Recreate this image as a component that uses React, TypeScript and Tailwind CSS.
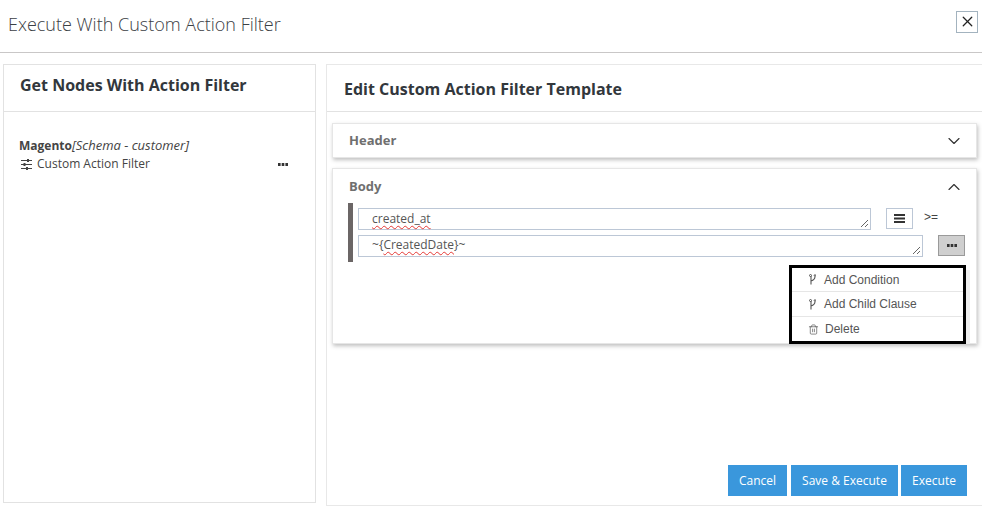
import { ChevronDown, ChevronUp, Trash2, X } from 'lucide-react';

const Dots = () => (
  <svg width="10" height="3" viewBox="0 0 10 3" className="fill-[#333]">
    <rect x="0" y="0" width="2.6" height="3" />
    <rect x="3.7" y="0" width="2.6" height="3" />
    <rect x="7.4" y="0" width="2.6" height="3" />
  </svg>
);

const Grip = () => (
  <svg width="9" height="9" viewBox="0 0 9 9" className="absolute right-[1px] bottom-[1px] stroke-[#666]" fill="none">
    <path d="M1 8 8 1M5 8 8 5" strokeWidth="1" />
  </svg>
);

const BranchIcon = () => (
  <svg width="7" height="11" viewBox="0 0 7 11" fill="none" className="stroke-[#555]">
    <path d="M2 2V10.5M6 2.5C6 5 5 6 2 7" strokeWidth="1.1" />
    <circle cx="1.5" cy="1.5" r="1" />
    <circle cx="6" cy="1.5" r="0.8" />
  </svg>
);

const SlidersIcon = () => (
  <svg width="11" height="11" viewBox="0 0 11 11" className="fill-[#444]">
    <rect x="0" y="1" width="11" height="1" />
    <rect x="6" y="0" width="2" height="3" />
    <rect x="0" y="5" width="11" height="1" />
    <rect x="2.5" y="4" width="2" height="3" />
    <rect x="0" y="9" width="11" height="1" />
    <rect x="5" y="8" width="2" height="3" />
  </svg>
);

const BarsIcon = () => (
  <svg width="11" height="9" viewBox="0 0 11 9" className="fill-[#333]">
    <rect x="0" y="0" width="11" height="2" />
    <rect x="0" y="3.5" width="11" height="2" />
    <rect x="0" y="7" width="11" height="2" />
  </svg>
);

const menuItems = [
  { label: 'Add Condition', icon: <BranchIcon />, row: 'h-[24px] gap-[8px] pl-[17px] border-b border-[#e6e6e6]' },
  { label: 'Add Child Clause', icon: <BranchIcon />, row: 'h-[25px] gap-[8px] pl-[17px] border-b border-[#e6e6e6]' },
  { label: 'Delete', icon: <Trash2 size={11} strokeWidth={1.5} className="text-[#555]" />, row: 'h-[24px] gap-[6px] pl-[16px]' },
];

export default function App() {
  return (
    <div className="w-[982px] h-[513px] overflow-hidden bg-white text-[#333] font-['Open_Sans',sans-serif]">
      <div className="h-[53px] flex items-center justify-between border-b border-[#c9c7c7] pl-[8px] pr-[4px]">
        <h1 className="text-[18px] font-light text-[#3b4045] mb-[3px]">Execute With Custom Action Filter</h1>
        <button className="w-[22px] h-[22px] mb-[9px] flex items-center justify-center border border-[#a3b3bf]">
          <X size={17} strokeWidth={1.8} className="text-[#222]" />
        </button>
      </div>

      <div className="flex pt-[11px] pl-[3px] gap-[10px]">
        <div className="w-[313px] h-[439px] border border-[#e2e2e2]">
          <div className="h-[47px] border-b border-[#e2e2e2] pl-[16px] flex items-center">
            <h2 className="text-[16px] font-bold text-[#32373c] mb-[7px]">Get Nodes With Action Filter</h2>
          </div>
          <div className="pt-[24px] pl-[15px] pr-[27px] text-[12px] leading-[18px]">
            <div className="text-[#444]">
              <span className="font-bold">Magento</span>
              <span className="italic text-[13px]">[Schema - customer]</span>
            </div>
            <div className="flex items-center justify-between">
              <div className="flex items-center gap-[5px] text-[#444] pl-[2px] mb-[1px]">
                <SlidersIcon />
                <span>Custom Action Filter</span>
              </div>
              <Dots />
            </div>
          </div>
        </div>

        <div className="flex-1 h-[442px] border border-[#e8e8e8] border-r-0 flex flex-col">
          <div className="h-[47px] border-b border-[#e2e2e2] pl-[17px] flex items-center shrink-0">
            <h2 className="text-[16px] font-bold text-[#32373c] mt-[2px]">Edit Custom Action Filter Template</h2>
          </div>

          <div className="pl-[5px] pr-[5px] pt-[11px] flex flex-col gap-[10px]">
            <div className="h-[35px] border border-[#e6e6e6] shadow-[1px_2px_4px_rgba(0,0,0,0.25)] flex items-center justify-between pl-[16px] pr-[12px]">
              <span className="text-[13px] font-bold text-[#6f6f6f]">Header</span>
              <ChevronDown size={20} strokeWidth={1.4} className="text-[#333]" />
            </div>

            <div className="relative h-[176px] border border-[#e6e6e6] shadow-[1px_2px_4px_rgba(0,0,0,0.25)]">
              <div className="h-[34px] flex items-center justify-between pl-[16px] pr-[12px] pb-[1px] pt-[2px]">
                <span className="text-[13px] font-bold text-[#6f6f6f]">Body</span>
                <ChevronUp size={20} strokeWidth={1.4} className="text-[#333]" />
              </div>

              <div className="ml-[15px] h-[59px] border-l-[5px] border-[#6b6666] pl-[5px] pt-[5px] flex flex-col gap-[5px] text-[12px]">
                <div className="flex items-start h-[22px]">
                  <div className="relative w-[513px] h-[22px] border border-[#bcc7d6] pl-[13px] pt-[1px] leading-[18px] text-[#555]">
                    <span className="underline decoration-wavy decoration-[#e53935] decoration-1 underline-offset-2">created_at</span>
                    <Grip />
                  </div>
                  <button className="ml-[15px] w-[27px] h-[21px] border border-[#bcc7d6] flex items-center justify-center">
                    <BarsIcon />
                  </button>
                  <span className="ml-[11px] text-[12px] text-[#444] font-['Liberation_Sans',sans-serif]">&gt;=</span>
                </div>
                <div className="flex items-start h-[22px]">
                  <div className="relative w-[565px] h-[22px] border border-[#bcc7d6] pl-[13px] leading-[18px] text-[#555]">
                    ~{'{'}<span className="underline decoration-wavy decoration-[#e53935] decoration-1 underline-offset-2">CreatedDate</span>{'}'}~
                    <Grip />
                  </div>
                  <button className="ml-[15px] w-[27px] h-[21px] bg-[#cfcfcf] border border-[#9a9a9a] flex items-center justify-center">
                    <Dots />
                  </button>
                </div>
              </div>

              <div className="absolute top-[96px] left-[456px] w-[177px] h-[79px] border-[3px] border-black bg-white text-[12px] text-[#555] font-['Liberation_Sans',sans-serif]">
                {menuItems.map((item) => (
                  <div key={item.label} className={`flex items-center ${item.row}`}>
                    {item.icon}
                    <span>{item.label}</span>
                  </div>
                ))}
              </div>
              <div className="absolute top-[101px] left-[633px] w-[4px] h-[74px] bg-[#eeeeee]" />
            </div>
          </div>

          <div className="mt-auto pb-[9px] pr-[15px] flex justify-end gap-[3px] text-[12px] text-white">
            <button className="w-[59px] h-[31px] mr-[1px] bg-[#3a97dc]">Cancel</button>
            <button className="w-[107px] h-[31px] bg-[#3a97dc]">Save &amp; Execute</button>
            <button className="w-[66px] h-[31px] bg-[#3a97dc]">Execute</button>
          </div>
        </div>
      </div>
    </div>
  );
}
